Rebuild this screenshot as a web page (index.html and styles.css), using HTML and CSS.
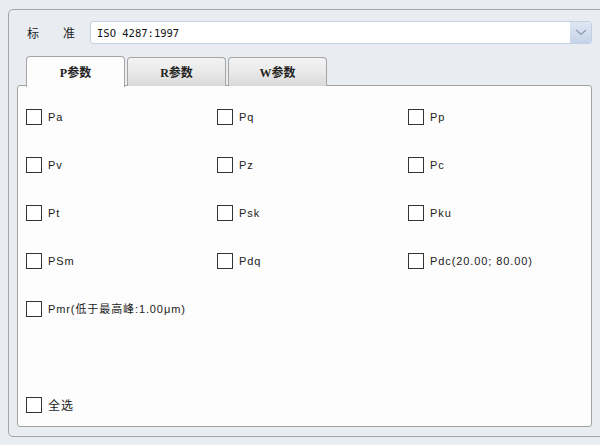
FILE: index.html
```html
<!DOCTYPE html>
<html>
<head>
<meta charset="utf-8">
<link rel="stylesheet" href="styles.css">
</head>
<body>
<div class="outer">
  <div class="header">
    <div class="label"><span>标</span><span>准</span></div>
    <div class="combo">
      <span class="combo-text">ISO 4287:1997</span>
      <span class="combo-btn">
        <svg width="12" height="7" viewBox="0 0 12 7"><path d="M1 1 L6 5.5 L11 1" fill="none" stroke="#8e9cb2" stroke-width="1.3"/></svg>
      </span>
    </div>
  </div>
  <div class="tabs">
    <div class="tab active">P参数</div>
    <div class="tab">R参数</div>
    <div class="tab">W参数</div>
  </div>
  <div class="panel">
    <div class="grid">
      <label class="item"><span class="box"></span><span class="txt">Pa</span></label>
      <label class="item"><span class="box"></span><span class="txt">Pq</span></label>
      <label class="item"><span class="box"></span><span class="txt">Pp</span></label>
      <label class="item"><span class="box"></span><span class="txt">Pv</span></label>
      <label class="item"><span class="box"></span><span class="txt">Pz</span></label>
      <label class="item"><span class="box"></span><span class="txt">Pc</span></label>
      <label class="item"><span class="box"></span><span class="txt">Pt</span></label>
      <label class="item"><span class="box"></span><span class="txt">Psk</span></label>
      <label class="item"><span class="box"></span><span class="txt">Pku</span></label>
      <label class="item"><span class="box"></span><span class="txt">PSm</span></label>
      <label class="item"><span class="box"></span><span class="txt">Pdq</span></label>
      <label class="item"><span class="box"></span><span class="txt">Pdc(20.00; 80.00)</span></label>
      <label class="item wide"><span class="box"></span><span class="txt">Pmr(低于最高峰:1.00μm)</span></label>
    </div>
    <label class="item all"><span class="box"></span><span class="txt">全选</span></label>
  </div>
</div>
</body>
</html>
```
FILE: styles.css
```css
html, body {
  margin: 0;
  padding: 0;
  background: #e9edf2;
  overflow: hidden;
  width: 600px;
  height: 445px;
}
body {
  font-family: "Liberation Sans", "Noto Sans CJK SC", sans-serif;
  color: #222;
}
.outer {
  margin: 9px 0 0 8px;
  width: 620px;
  height: 428px;
  box-sizing: border-box;
  border: 1px solid #a3a6aa;
  border-radius: 5px;
  padding: 11px 0 0 8px;
  background: #e9edf2;
}
.header {
  display: flex;
  align-items: center;
  height: 23px;
  padding-left: 10px;
}
.label {
  width: 48px;
  display: flex;
  justify-content: space-between;
  font-family: "Noto Sans CJK SC", sans-serif;
  font-size: 12px;
  color: #222;
}
.combo {
  margin-left: 15px;
  width: 502px;
  height: 23px;
  box-sizing: border-box;
  border: 1px solid #c3d0e3;
  border-radius: 3px;
  background: #fff;
  display: flex;
  align-items: center;
  justify-content: space-between;
}
.combo-text {
  font-family: "DejaVu Sans Mono", monospace;
  font-size: 10.5px;
  padding-left: 6px;
  color: #111;
}
.combo-btn {
  width: 21px;
  height: 21px;
  border-radius: 0 2px 2px 0;
  background: linear-gradient(#dfe7f3, #c5d3e9);
  display: flex;
  align-items: center;
  justify-content: center;
}
.tabs {
  display: flex;
  gap: 2px;
  margin: 12px 0 0 9px;
  height: 30px;
  position: relative;
  z-index: 1;
}
.tab {
  width: 99px;
  height: 29px;
  box-sizing: border-box;
  border: 1px solid #a5a5a5;
  border-bottom: none;
  border-radius: 4px 4px 0 0;
  background: linear-gradient(#f3f3f3 0%, #ebebeb 45%, #d9d9d9 100%);
  margin-top: 1px;
  display: flex;
  align-items: center;
  justify-content: center;
  font-family: "Liberation Serif", "Noto Sans CJK SC", serif;
  font-weight: bold;
  font-size: 12px;
  color: #222;
}
.tab.active {
  background: #fdfdfd;
  height: 31px;
  margin-top: 0;
}
.panel {
  width: 575px;
  height: 342px;
  box-sizing: border-box;
  border: 1px solid #a3a3a3;
  border-radius: 3px;
  background: #fdfdfd;
  margin-top: -1px;
  padding: 23px 0 0 8px;
  display: flex;
  flex-direction: column;
}
.grid {
  display: grid;
  grid-template-columns: 191px 191px 191px;
  grid-auto-rows: 48px;
}
.item {
  display: flex;
  align-items: flex-start;
  height: 16px;
}
.wide {
  grid-column: span 3;
}
.box {
  width: 16px;
  height: 16px;
  box-sizing: border-box;
  border: 1px solid #333;
  background: #fff;
  flex: none;
}
.txt {
  margin-left: 6px;
  font-size: 11px;
  line-height: 16px;
  letter-spacing: 0.9px;
  color: #222;
}
.all {
  margin-top: 48px;
}
.all .txt {
  font-family: "Noto Sans CJK SC", sans-serif;
  font-size: 12px;
  letter-spacing: 1px;
}
```
